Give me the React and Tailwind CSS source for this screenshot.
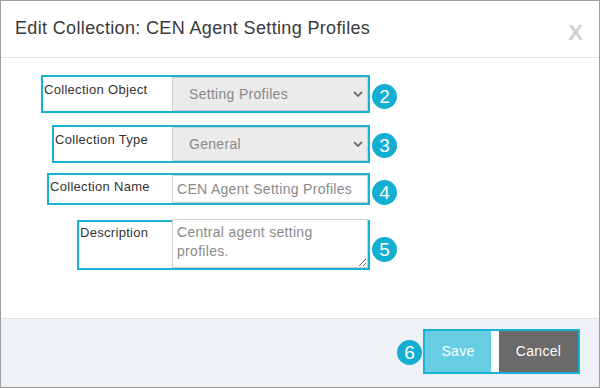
import React from "react";

const font = { fontFamily: '"Liberation Sans", Arial, sans-serif' };

function Badge({ n, className = "" }) {
  return (
    <div
      className={`w-[25px] h-[25px] rounded-full bg-[#13aed2] text-white flex items-center justify-center text-[19px] leading-none shrink-0 ${className}`}
    >
      {n}
    </div>
  );
}

function Chevron() {
  return (
    <svg width="10" height="6" viewBox="0 0 10 6" className="shrink-0">
      <path d="M1 1 L5 5 L9 1" fill="none" stroke="#6f6f6f" strokeWidth="1.8" />
    </svg>
  );
}

function SelectBox({ value }) {
  return (
    <div className="w-[196px] h-[34px] bg-[#ebebeb] border border-[#cfcfcf] flex items-center justify-between pl-[16px] pr-[4px] text-[14px] tracking-[0.3px] text-[#8a8a8a]">
      <span>{value}</span>
      <Chevron />
    </div>
  );
}

export default function App() {
  return (
    <div
      className="w-[600px] h-[388px] border border-[#9f9f9f] bg-white flex flex-col text-[#333]"
      style={font}
    >
      <div className="h-[57px] border-b border-[#e3e3e3] flex items-center justify-between pl-[14px] pr-[16px] shrink-0">
        <div className="text-[18px] tracking-[0.35px] text-[#3a3a3a] pb-[1px]">Edit Collection: CEN Agent Setting Profiles</div>
        <div className="text-[22px] font-bold text-[#d0d0d0] leading-none pt-[7px]">X</div>
      </div>

      <div className="flex-1 flex flex-col pt-[17px]">
        <div className="w-[396px] flex items-center justify-end">
          <div className="border-2 border-[#17b2d4] flex">
            <div className="w-[129px] pl-[1px] pt-[3px] text-[13px] tracking-[0.3px] text-[#333]">Collection Object</div>
            <SelectBox value="Setting Profiles" />
          </div>
          <Badge n="2" className="ml-[2px] translate-y-[2px]" />
        </div>

        <div className="w-[396px] flex items-center justify-end mt-[12px]">
          <div className="border-2 border-[#17b2d4] flex">
            <div className="w-[118px] pl-[1px] pt-[3px] text-[13px] tracking-[0.3px] text-[#333]">Collection Type</div>
            <SelectBox value="General" />
          </div>
          <Badge n="3" className="ml-[2px] translate-y-[1px]" />
        </div>

        <div className="w-[396px] flex items-center justify-end mt-[10px]">
          <div className="border-2 border-[#17b2d4] flex">
            <div className="w-[123px] pl-[1px] pt-[2px] text-[13px] tracking-[0.3px] text-[#333]">Collection Name</div>
            <div className="w-[196px] h-[28px] border border-[#cfcfcf] bg-white flex items-center pl-[4px] text-[14px] tracking-[0.3px] text-[#8a8a8a]">
              CEN Agent Setting Profiles
            </div>
          </div>
          <Badge n="4" className="ml-[2px] translate-y-[3px]" />
        </div>

        <div className="w-[396px] flex items-center justify-end mt-[15px]">
          <div className="border-2 border-[#17b2d4] flex items-start h-[50px]">
            <div className="w-[93px] pl-[1px] pt-[1px] text-[13px] tracking-[0.3px] text-[#333]">Description</div>
            <textarea
              readOnly
              defaultValue="Central agent setting profiles."
              className="w-[196px] h-[49px] -mt-[3px] border border-[#cfcfcf] bg-white pl-[4px] pr-[8px] pt-[3px] text-[14px] tracking-[0.3px] leading-[19px] text-[#8a8a8a] outline-none"
              style={font}
            />
          </div>
          <Badge n="5" className="ml-[2px] translate-y-[4px]" />
        </div>
      </div>

      <div className="h-[69px] shrink-0 border-t border-[#dde2e8] bg-[#eef1f6] flex items-start justify-end pt-[10px] pr-[19px]">
        <div className="flex items-center">
          <Badge n="6" className="mr-[1px] translate-y-[1px]" />
          <div className="border-2 border-[#17b2d4] bg-white flex gap-[8px]">
            <div className="w-[66px] h-[41px] bg-[#66cde2] text-white text-[14px] tracking-[0.3px] flex items-center justify-center">Save</div>
            <div className="w-[79px] h-[41px] bg-[#6a6a6b] text-white text-[14px] tracking-[0.3px] flex items-center justify-center">Cancel</div>
          </div>
        </div>
      </div>
    </div>
  );
}
